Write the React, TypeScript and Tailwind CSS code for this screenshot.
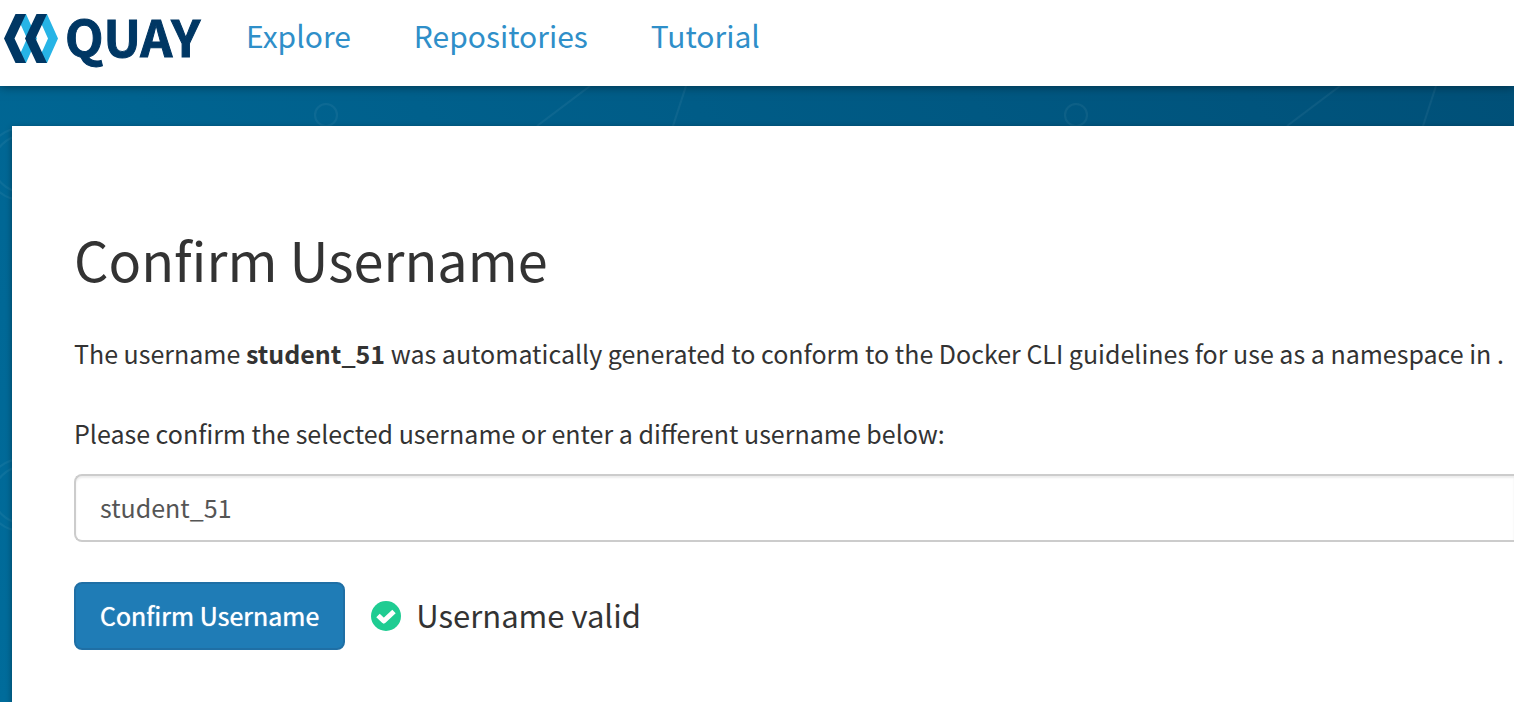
import { useState } from "react";

const links = ["Explore", "Repositories", "Tutorial"];

function Logo() {
  return (
    <svg width="204" height="72" viewBox="0 0 204 72" role="img" aria-label="Quay" className="shrink-0 overflow-visible">
      <path d="M16 14h10l11 24.500L26 63H16l11-24.500z" fill="#27b4e6" />
      <path d="M15.500 14H26L14.500 38.500 26 63H15.500L4 38.500z" fill="#003764" />
      <path d="M37 14h10l11 24.500L47 63H37l11-24.500z" fill="#27b4e6" />
      <path d="M36.500 14H47L35.500 38.500 47 63H36.500L25 38.500z" fill="#003764" />
      <text
        x="65"
        y="57"
        fill="#003764"
        stroke="#003764"
        strokeWidth="1"
        fontSize="50"
        className="font-['Noto_Sans_CJK_SC',sans-serif] font-bold"
      >
        QUAY
      </text>
    </svg>
  );
}

function Backdrop() {
  return (
    <svg className="absolute inset-0 h-full w-full" aria-hidden="true">
      <defs>
        <pattern id="network" width="750" height="331" patternUnits="userSpaceOnUse">
          <g fill="none" stroke="#fff" strokeOpacity="0.05" strokeWidth="2">
            <circle cx="326" cy="29" r="11" />
            <path d="M590 0L537 40M686 0L673 40" />
            <circle cx="22" cy="78" r="36" />
            <circle cx="22" cy="78" r="28" />
          </g>
        </pattern>
      </defs>
      <rect width="100%" height="100%" fill="url(#network)" />
    </svg>
  );
}

export default function App() {
  const [name, setName] = useState("student_51");
  return (
    <div className="flex min-h-screen flex-col overflow-x-hidden bg-white font-['Noto_Sans_CJK_SC',sans-serif] text-[25px] leading-10 text-[#333]">
      <header className="relative z-10 flex h-[86px] items-start bg-white shadow-[0_0_10px_rgba(0,0,0,0.5)]">
        <a href="#home">
          <Logo />
        </a>
        <nav className="flex gap-[63px] pt-[15px] pl-[42px] text-[30px] text-[#2f8fc9]">
          {links.map((label) => (
            <a key={label} href={`#${label.toLowerCase()}`}>
              {label}
            </a>
          ))}
        </nav>
      </header>
      <div className="relative flex grow flex-col bg-linear-[55deg,#006c9b,#005078] pt-10 pl-3">
        <Backdrop />
        <main className="relative grow bg-white pt-[101px] pb-[52px] pl-[62px] shadow-[0_2px_6px_rgba(0,0,0,0.4)]">
          <h1 className="text-[54px] leading-[64px]">Confirm Username</h1>
          <p className="mt-[42px] whitespace-nowrap">
            The username <strong className="font-bold">student_51</strong> was automatically generated to conform to
            the Docker CLI guidelines for use as a namespace in .
          </p>
          <form onSubmit={(event) => event.preventDefault()}>
            <label htmlFor="username" className="mt-10 block">
              Please confirm the selected username or enter a different username below:
            </label>
            <input
              id="username"
              value={name}
              onChange={(event) => setName(event.target.value)}
              className="mt-[21px] block h-[68px] w-full rounded-l-lg border-2 border-r-0 border-[#ccc] bg-white px-6 pb-0.5 text-[#555] shadow-[inset_0_2px_2px_rgba(0,0,0,0.075)] outline-none"
            />
            <div className="mt-10 flex items-center">
              <button
                type="submit"
                className="h-[68px] rounded-lg border-2 border-[#1f6fa5] bg-[#1f7cb6] px-6 pb-0.5 text-white [text-shadow:0_0_1px_#fff]"
              >
                Confirm Username
              </button>
              <svg width="30" height="30" viewBox="0 0 30 30" className="ml-[26px]" aria-hidden="true">
                <circle cx="15" cy="15" r="15" fill="#1fcc92" />
                <path d="M7 14.500l5.800 5.500L23 10.500" fill="none" stroke="#fff" strokeWidth="5" strokeLinejoin="round" />
              </svg>
              <span className="ml-[15px] pb-0.5 text-[31px]">Username valid</span>
            </div>
          </form>
        </main>
      </div>
    </div>
  );
}
